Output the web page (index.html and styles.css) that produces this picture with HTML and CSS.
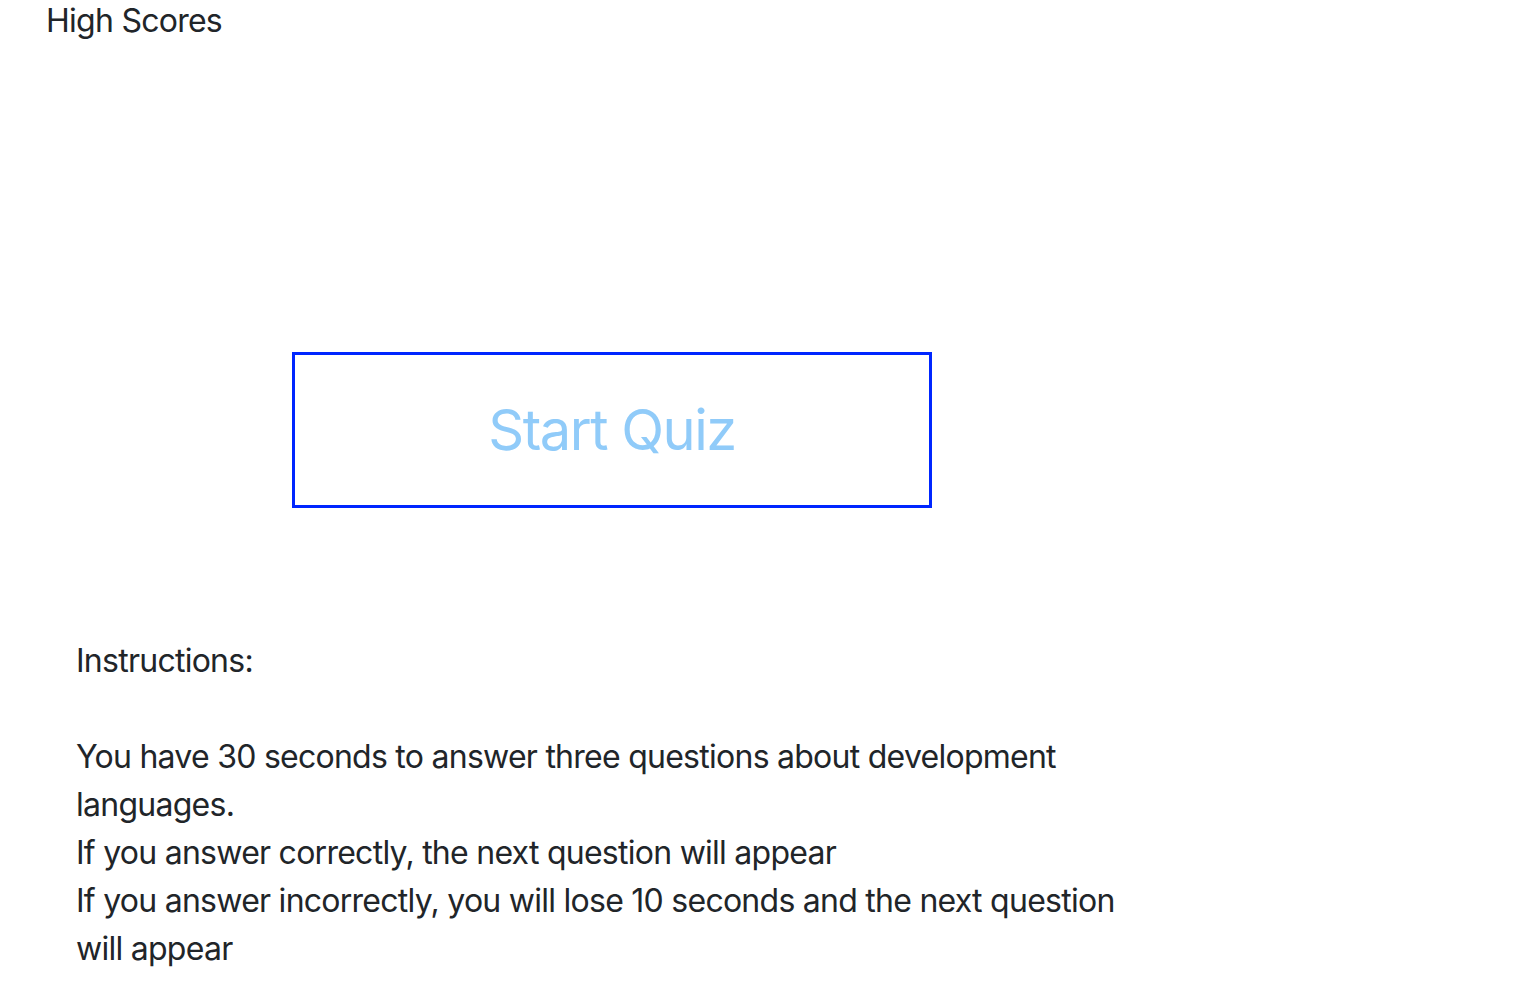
FILE: index.html
```html
<!DOCTYPE html>
<html>
<head>
<meta charset="utf-8">
<title>Quiz</title>
<link rel="stylesheet" href="styles.css">
</head>
<body>
<header class="topbar">
  <a class="high-scores">High Scores</a>
</header>
<main class="main">
  <div class="start-wrap">
    <button class="start-btn">Start Quiz</button>
  </div>
  <section class="instructions">
    <p>Instructions:</p>
    <p class="blank">&nbsp;</p>
    <p>You have 30 seconds to answer three questions about development languages.</p>
    <p>If you answer correctly, the next question will appear</p>
    <p>If you answer incorrectly, you will lose 10 seconds and the next question will appear</p>
  </section>
</main>
</body>
</html>
```
FILE: styles.css
```css
html, body {
  margin: 0;
  padding: 0;
  background: #ffffff;
}
body {
  font-family: Inter, "Noto Sans", "Liberation Sans", sans-serif;
  font-size: 32px;
  line-height: 48px;
  color: #212529;
  letter-spacing: -0.74px;
}
.topbar {
  padding: 0 0 0 46px;
  height: 41px;
  margin-top: -3px;
}
.high-scores {
  color: #212529;
  text-decoration: none;
}
.main {
  display: flex;
  flex-direction: column;
}
.start-wrap {
  padding: 314px 0 0 292px;
}
.start-btn {
  box-sizing: border-box;
  width: 640px;
  height: 156px;
  border: 3px solid #0026ff;
  background: #ffffff;
  color: #90cbf9;
  font-family: Inter, "Noto Sans", "Liberation Sans", sans-serif;
  font-size: 56px;
  letter-spacing: -1.5px;
  padding: 0;
  cursor: pointer;
}
.instructions {
  padding: 129px 0 0 76px;
  width: 1090px;
}
.instructions p {
  margin: 0;
}
```
